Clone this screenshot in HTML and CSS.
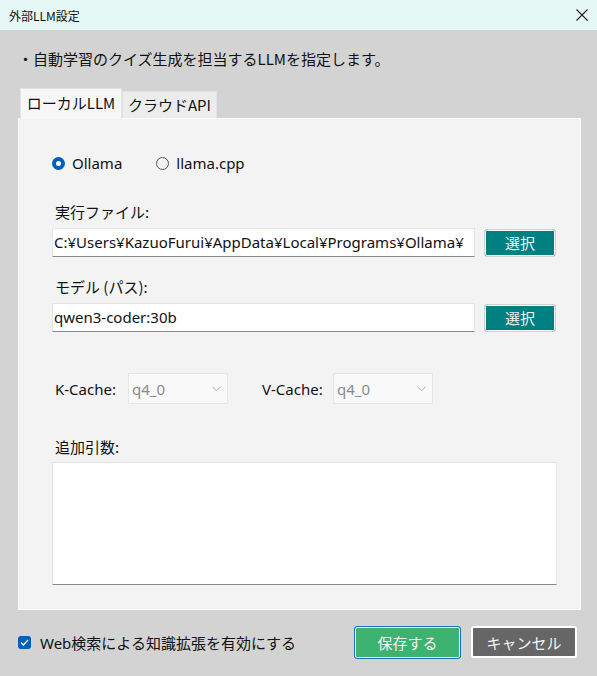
FILE: index.html
```html
<!DOCTYPE html>
<html lang="ja">
<head>
    <meta charset="UTF-8">
    <title>外部LLM設定</title>
    <link rel="stylesheet" href="styles.css">
</head>
<body>
    <div class="window">
        <div class="titlebar">
            <span class="title">外部LLM設定</span>
            <svg class="close" width="12" height="12" viewBox="0 0 12 12">
                <path d="M0.5 0.5 L11.5 11.5 M11.5 0.5 L0.5 11.5" stroke="#222" stroke-width="1.1"/>
            </svg>
        </div>

        <div class="content">
            <p class="intro">・自動学習のクイズ生成を担当するLLMを指定します。</p>

            <!-- tabs -->
            <div class="tabs">
                <div class="tab active">ローカルLLM</div>
                <div class="tab">クラウドAPI</div>
            </div>

            <div class="panel">
                <div class="radio-row">
                    <label class="radio checked"><span class="dot"></span>Ollama</label>
                    <label class="radio"><span class="dot"></span>llama.cpp</label>
                </div>

                <div class="field-label">実行ファイル:</div>
                <div class="path-row">
                    <div class="input">C:¥Users¥KazuoFurui¥AppData¥Local¥Programs¥Ollama¥</div>
                    <button class="pick">選択</button>
                </div>

                <div class="field-label">モデル (パス):</div>
                <div class="path-row">
                    <div class="input">qwen3-coder:30b</div>
                    <button class="pick">選択</button>
                </div>

                <div class="cache-row">
                    <span class="cache-label">K-Cache:</span>
                    <div class="select">q4_0
                        <svg width="9" height="6" viewBox="0 0 9 6"><path d="M0.5 0.8 L4.5 4.8 L8.5 0.8" fill="none" stroke="#aaa" stroke-width="1"/></svg>
                    </div>
                    <span class="cache-label second">V-Cache:</span>
                    <div class="select">q4_0
                        <svg width="9" height="6" viewBox="0 0 9 6"><path d="M0.5 0.8 L4.5 4.8 L8.5 0.8" fill="none" stroke="#aaa" stroke-width="1"/></svg>
                    </div>
                </div>

                <div class="field-label extra">追加引数:</div>
                <div class="textarea"></div>
            </div>

            <div class="footer">
                <label class="check">
                    <span class="box">
                        <svg width="9" height="7" viewBox="0 0 9 7"><path d="M1 3.6 L3.4 6 L8 1" fill="none" stroke="#fff" stroke-width="1.3"/></svg>
                    </span>
                    Web検索による知識拡張を有効にする
                </label>
                <div class="actions">
                    <button class="button save">保存する</button>
                    <button class="button cancel">キャンセル</button>
                </div>
            </div>
        </div>
    </div>
</body>
</html>
```

FILE: styles.css
```css
body {
    margin: 0;
    font-family: "Noto Sans", "Noto Sans CJK JP", sans-serif;
    color: #111;
}
.window {
    width: 597px;
    height: 676px;
    background: #d3d3d3;
    overflow: hidden;
}
.titlebar {
    height: 30px;
    background: #e5f8f6;
    display: flex;
    align-items: center;
    justify-content: space-between;
    padding: 0 9px 0 9px;
    box-sizing: border-box;
}
.title {
    font-size: 12px;
    font-family: "Noto Sans CJK JP", sans-serif;
}
.content {
    padding: 0 16px 0 18px;
}
.intro {
    margin: 0;
    padding-top: 18px;
    height: 22px;
    line-height: 22px;
    font-size: 15px;
    font-family: "Noto Sans CJK JP", sans-serif;
}
.tabs {
    display: flex;
    align-items: flex-end;
    margin-top: 18px;
    padding-left: 2px;
    height: 30px;
    position: relative;
    z-index: 1;
}
.tab {
    font-size: 15px;
    font-family: "Noto Sans CJK JP", sans-serif;
    background: #ececec;
    height: 27px;
    line-height: 26px;
    width: 95px;
    text-align: center;
    box-sizing: border-box;
    border: 1px solid #e2e2e2;
    border-bottom: none;
    white-space: nowrap;
}
.tab.active {
    background: #f7f7f7;
    height: 31px;
    line-height: 28px;
    width: 102px;
    margin-bottom: -1px;
}
.panel {
    background: #f3f3f3;
    border: 1px solid #fafafa;
    height: 492px;
    box-sizing: border-box;
    padding: 0 24px 0 33px;
}
.radio-row {
    display: flex;
    gap: 34px;
    padding-top: 33px;
    height: 22px;
    align-items: center;
}
.radio {
    display: flex;
    align-items: center;
    font-size: 15px;
}
.dot {
    width: 11px;
    height: 11px;
    border: 1px solid #555;
    border-radius: 50%;
    margin-right: 7px;
    box-sizing: content-box;
}
.radio.checked .dot {
    width: 5px;
    height: 5px;
    border: 4px solid #005fb8;
    background: #fff;
}
.field-label {
    font-size: 15px;
    font-family: "Noto Sans CJK JP", sans-serif;
    margin-top: 28px;
    height: 20px;
    line-height: 20px;
    padding-left: 3px;
}
.path-row {
    display: flex;
    align-items: center;
    margin-top: 6px;
    gap: 9px;
}
.path-row + .field-label {
    margin-top: 20px;
}
.input {
    width: 424px;
    height: 29px;
    box-sizing: border-box;
    background: #fff;
    border: 1px solid #e6e6e6;
    border-bottom: 1px solid #8a8a8a;
    font-size: 15px;
    line-height: 27px;
    padding-left: 1px;
    white-space: nowrap;
    overflow: hidden;
}
.pick {
    width: 72px;
    height: 28px;
    background: #008080;
    border: 1px solid #d2d2d2;
    border-radius: 3px;
    box-shadow: inset 0 0 0 1px #fafafa;
    color: #f2f2f2;
    font-size: 15px;
    font-family: "Noto Sans CJK JP", sans-serif;
    padding: 0;
}
.cache-row {
    display: flex;
    align-items: center;
    margin-top: 41px;
    height: 31px;
    padding-left: 3px;
}
.cache-label {
    font-size: 15px;
    width: 73px;
}
.cache-label.second {
    margin-left: 34px;
    width: 71px;
}
.select {
    width: 100px;
    height: 31px;
    box-sizing: border-box;
    background: #f9f9f9;
    border: 1px solid #e6e6e6;
    color: #8a8a8a;
    font-size: 15px;
    display: flex;
    align-items: center;
    justify-content: space-between;
    padding: 0 6px 0 3px;
}
.field-label.extra {
    margin-top: 33px;
}
.textarea {
    margin-top: 5px;
    width: 505px;
    height: 123px;
    box-sizing: border-box;
    background: #fff;
    border: 1px solid #e6e6e6;
    border-bottom: 1px solid #8a8a8a;
}
.footer {
    display: flex;
    justify-content: space-between;
    align-items: center;
    margin-top: 16px;
    padding-right: 4px;
}
.check {
    display: flex;
    align-items: center;
    font-size: 15px;
    font-family: "Noto Sans", "Noto Sans CJK JP", sans-serif;
}
.box {
    width: 13px;
    height: 13px;
    background: #005fb8;
    border-radius: 3px;
    display: flex;
    align-items: center;
    justify-content: center;
    margin-right: 9px;
}
.actions {
    display: flex;
    gap: 10px;
}
.button {
    width: 107px;
    height: 33px;
    border-radius: 3px;
    font-size: 15px;
    font-family: "Noto Sans CJK JP", sans-serif;
    color: #f4f4f4;
    padding: 0;
}
.save {
    background: #3cb371;
    border: 1px solid #1e6fc0;
    box-shadow: inset 0 0 0 1px #f6f6f6;
}
.cancel {
    background: #666;
    border: 2px solid #fff;
    width: 106px;
    height: 32px;
}
```
